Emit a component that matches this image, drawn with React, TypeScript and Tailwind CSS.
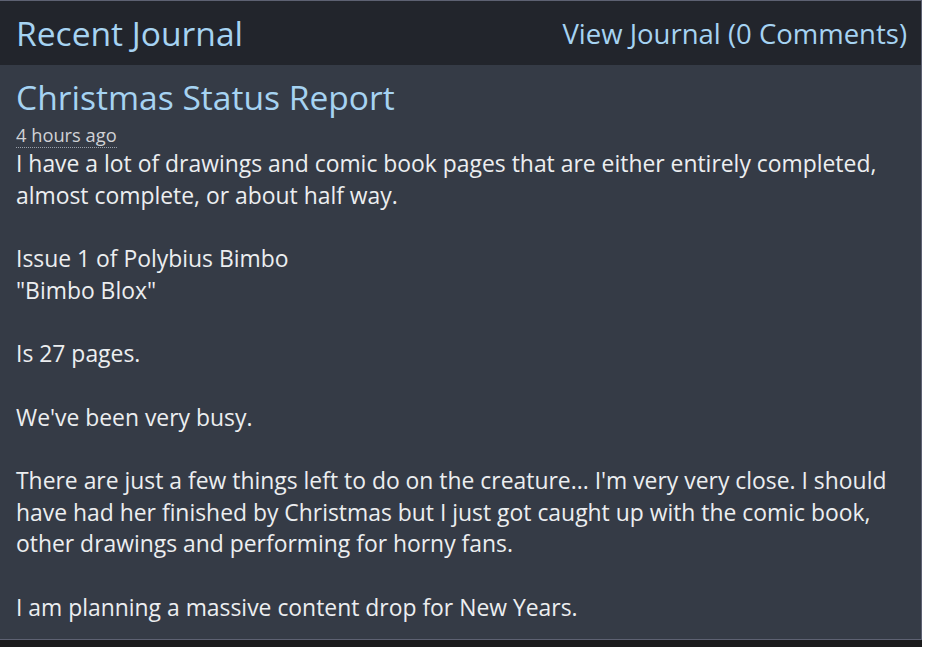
export default function App() {
  const font = { fontFamily: '"Open Sans", "Noto Sans", sans-serif' };
  return (
    <div className="w-[926px] h-[647px] bg-white overflow-hidden" style={font}>
      <div className="w-[922px] h-full flex flex-col bg-[#1b1b1c]">
        <div className="border-t border-r border-b border-[#5d6172] bg-[#353b46]">
          <div className="h-[64px] bg-[#22252c] flex items-center justify-between pl-4 pr-[14px] pt-[2px]">
            <span className="text-[33.6px] leading-none text-[#a6d3f2]">Recent Journal</span>
            <span className="text-[27.5px] leading-none text-[#a6d3f2]">View Journal (0 Comments)</span>
          </div>
          <div className="px-4 pt-[13px] pb-[15px]">
            <h2 className="text-[33.6px] leading-[38px] text-[#a6d3f2]">Christmas Status Report</h2>
            <div className="mt-[8px]">
              <span className="text-[18.3px] leading-[22px] text-[#d0d2d6] border-b border-dotted border-[#9aa0aa]">4 hours ago</span>
            </div>
            <p className="text-[22.9px] leading-[31.7px] text-[#eceef0]">
              I have a lot of drawings and comic book pages that are either entirely completed, almost complete, or about half way.
              <br /><br />
              Issue 1 of Polybius Bimbo
              <br />
              "Bimbo Blox"
              <br /><br />
              Is 27 pages.
              <br /><br />
              We've been very busy.
              <br /><br />
              There are just a few things left to do on the creature... I'm very very close. I should have had her finished by Christmas but I just got caught up with the comic book, other drawings and performing for horny fans.
              <br /><br />
              I am planning a massive content drop for New Years.
            </p>
          </div>
        </div>
      </div>
    </div>
  );
}
